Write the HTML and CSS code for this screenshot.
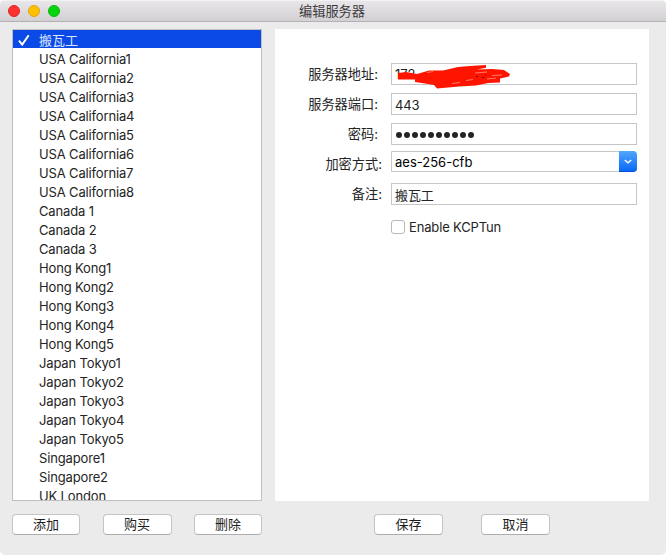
FILE: index.html
```html
<!DOCTYPE html>
<html lang="zh-CN">
<head>
<meta charset="utf-8">
<title>编辑服务器</title>
<link rel="stylesheet" href="styles.css">
</head>
<body>
<div class="window">
  <header class="titlebar">
    <div class="lights"><span class="light close"></span><span class="light minimize"></span><span class="light zoom"></span></div>
    <h1 class="title">编辑服务器</h1>
  </header>
  <main class="content">
    <section class="sidebar">
      <ul class="servers">
        <li class="selected"><svg class="check" viewBox="0 0 12 12"><path d="M1 6.7 4.2 10.6 10.7 1.2"/></svg>搬瓦工</li>
        <li>USA California1</li>
        <li>USA California2</li>
        <li>USA California3</li>
        <li>USA California4</li>
        <li>USA California5</li>
        <li>USA California6</li>
        <li>USA California7</li>
        <li>USA California8</li>
        <li>Canada 1</li>
        <li>Canada 2</li>
        <li>Canada 3</li>
        <li>Hong Kong1</li>
        <li>Hong Kong2</li>
        <li>Hong Kong3</li>
        <li>Hong Kong4</li>
        <li>Hong Kong5</li>
        <li>Japan Tokyo1</li>
        <li>Japan Tokyo2</li>
        <li>Japan Tokyo3</li>
        <li>Japan Tokyo4</li>
        <li>Japan Tokyo5</li>
        <li>Singapore1</li>
        <li>Singapore2</li>
        <li>UK London</li>
      </ul>
      <div class="actions">
        <button class="button narrow">添加</button>
        <button class="button">购买</button>
        <button class="button narrow">删除</button>
      </div>
    </section>
    <section class="details">
      <form class="panel">
        <div class="row"><span class="label">服务器地址:</span>
          <div class="field address">172
            <svg class="scribble" viewBox="0 0 140 36"><path d="M18 15 26 14 37 16 49 12.5 63 12.5 78 9 90 8 106 7V9.800L97 11.500 112 11 124 12 130 16 129 18.500 120 20.500V24.500L108 25 96 27.500 79 28.500 57 30.500 54 27 45 25.500 35 24V21.500L18 21.500Z"/><path class="glint" d="M47 14.500 53 13.500M72 25.500 80 24.500M95 15 107 14M112 17.500 122 17M107 21 116 20M86 22.500 93 21.500"/><path class="speck" d="M96 18.500h2M102 19.500h2M105 17h1"/></svg>
          </div>
        </div>
        <div class="row"><span class="label">服务器端口:</span><div class="field">443</div></div>
        <div class="row password"><span class="label">密码:</span>
          <div class="field dots"><i></i><i></i><i></i><i></i><i></i><i></i><i></i><i></i><i></i><i></i></div>
        </div>
        <div class="row method"><span class="label">加密方式:</span>
          <div class="field combo"><span>aes-256-cfb</span><span class="arrow"><svg viewBox="0 0 8 5"><path d="M.8 1 4 3.800 7.200 1"/></svg></span></div>
        </div>
        <div class="row remark"><span class="label">备注:</span><div class="field">搬瓦工</div></div>
        <div class="option"><span class="checkbox"></span><span class="caption">Enable KCPTun</span></div>
      </form>
      <div class="actions confirm">
        <button class="button" type="button">保存</button>
        <button class="button" type="button">取消</button>
      </div>
    </section>
  </main>
</div>
</body>
</html>
```
FILE: styles.css
```css
* { box-sizing: border-box; }

body {
  margin: 0;
  background: #fff;
  color: #242424;
  font: 13px/19px Inter, "Noto Sans CJK SC", sans-serif;
}

.window {
  height: 555px;
  overflow: hidden;
  border-radius: 5px;
  background: #ebebeb;
}

.titlebar {
  display: grid;
  grid-template-columns: 60px 1fr 60px;
  height: 22px;
  border-top: 1px solid #f3f2f3;
  border-bottom: 1px solid #b3b1b3;
  background: linear-gradient(#e8e6e8, #d2d0d2);
}

.lights {
  display: flex;
  gap: 8px;
  padding: 4px 0 0 8px;
}

.light {
  width: 12px;
  height: 12px;
  border: 1px solid;
  border-radius: 50%;
}

.close { background: #fc3130; border-color: #df2424; }
.minimize { background: #fdc003; border-color: #dfa511; }
.zoom { background: #06d50c; border-color: #0cb510; }

.title {
  margin: 0;
  padding-right: 2px;
  font-size: 13.2px;
  font-weight: 400;
  line-height: 20px;
  text-align: center;
  color: #3d3b3d;
}

.content {
  display: grid;
  grid-template-columns: 250px 374px;
  column-gap: 13px;
  padding: 7px 0 0 12px;
}

.servers {
  height: 472px;
  margin: 0;
  padding: 0;
  overflow: hidden;
  border: 1px solid #bfbfbf;
  background: #fff;
  list-style: none;
  letter-spacing: -.15px;
}

.servers li {
  height: 19px;
  padding: 1px 0 0 26px;
  line-height: 19px;
}

.servers .selected {
  display: flex;
  height: 18px;
  margin-bottom: 1px;
  padding: 0 0 0 5px;
  line-height: 20px;
  letter-spacing: 0;
  background: #0b4ae6;
  color: #dce6ff;
}

.check {
  width: 12px;
  height: 12px;
  margin: 4px 9px 0 0;
  fill: none;
  stroke: #fff;
  stroke-width: 2;
}

.actions {
  display: flex;
  justify-content: space-between;
  padding-top: 13px;
}

.confirm {
  justify-content: flex-start;
  gap: 38px;
  padding-left: 99px;
}

.button {
  width: 69px;
  height: 21px;
  padding: 0;
  border: 1px solid #c4c4c4;
  border-bottom-color: #adadad;
  border-radius: 4px;
  background: #fff;
  color: #1c1c1c;
  font: inherit;
  line-height: 19px;
}

.narrow { width: 68px; }

.panel {
  height: 472px;
  padding: 34px 12px 0 0;
  background: #fff;
}

.row {
  display: grid;
  grid-template-columns: 103px 246px;
  column-gap: 13px;
  height: 22px;
  margin-bottom: 8px;
}

.label {
  line-height: 22px;
  font-size: 13.2px;
  text-align: right;
  white-space: nowrap;
}

.field {
  height: 22px;
  padding-left: 3px;
  border: 1px solid #c6c6c8;
  line-height: 22px;
  letter-spacing: -.1px;
}

.address { position: relative; line-height: 20px; }

.scribble {
  position: absolute;
  top: -6px;
  left: -12px;
  width: 140px;
  height: 36px;
  fill: #ff1400;
}

.scribble .glint {
  fill: none;
  stroke: #ffc0b5;
  stroke-width: .6;
}

.scribble .speck {
  fill: none;
  stroke: #5c1010;
  stroke-width: 1;
}

.dots {
  display: flex;
  align-items: center;
  gap: 2px;
  padding: 2px 0 0 4px;
}

.dots i {
  width: 6px;
  height: 6px;
  border-radius: 50%;
  background: #242424;
}

.password { margin-bottom: 6px; }

.method,
.remark {
  grid-template-columns: 107px 246px;
  column-gap: 9px;
}

.method { margin-bottom: 10px; }

.method .label { line-height: 26px; }

.combo {
  display: flex;
  justify-content: space-between;
  height: 21px;
  border-radius: 0 4px 4px 0;
  line-height: 21px;
  letter-spacing: 0;
  color: #000;
}

.arrow {
  display: flex;
  align-items: center;
  justify-content: center;
  width: 18px;
  height: 21px;
  margin: -1px -1px 0 0;
  border-bottom: 1px solid #074fd8;
  border-radius: 0 4px 4px 0;
  background: linear-gradient(#52a7f8, #0869f7);
}

.arrow svg {
  width: 8px;
  height: 5px;
  margin-top: 1px;
  fill: none;
  stroke: #fff;
  stroke-width: 1.4;
}

.remark .label { line-height: 23px; }

.option {
  display: flex;
  align-items: center;
  gap: 4px;
  height: 14px;
  margin: 15px 0 0 116px;
  letter-spacing: -.15px;
}

.checkbox {
  width: 14px;
  height: 14px;
  border: 1px solid #b8b8b8;
  border-radius: 3px;
}
```
